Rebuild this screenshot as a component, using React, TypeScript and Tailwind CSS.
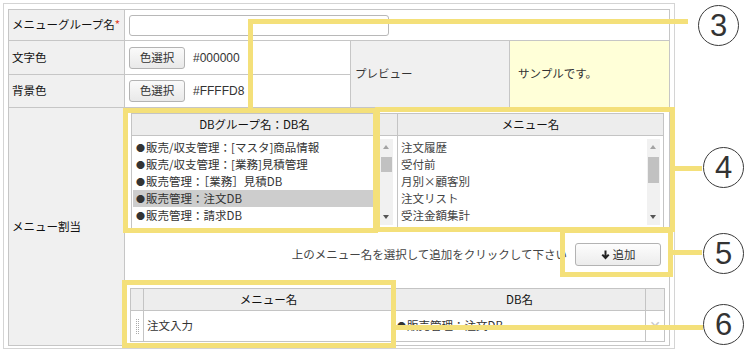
import React from "react";

const dbItems = [
    "販売/収支管理：[マスタ]商品情報",
    "販売/収支管理：[業務]見積管理",
    "販売管理：［業務］見積DB",
    "販売管理：注文DB",
    "販売管理：請求DB",
];

const menuItems = ["注文履歴", "受付前", "月別×顧客別", "注文リスト", "受注金額集計"];

function Scrollbar({ thumbTop, thumbHeight }: { thumbTop: number; thumbHeight: number }) {
    return (
        <div className="relative w-[13px] h-[86px] bg-[#f1f1f1]">
            <div className="absolute left-[3px] top-[6px] w-0 h-0 border-x-[3.5px] border-x-transparent border-b-[4px] border-b-[#a3a3a3]" />
            <div
                className="absolute left-[1px] w-[11px] bg-[#c1c1c1]"
                style={{ top: thumbTop, height: thumbHeight }}
            />
            <div className="absolute left-[3px] bottom-[6px] w-0 h-0 border-x-[3.5px] border-x-transparent border-t-[4px] border-t-[#555]" />
        </div>
    );
}

function Circled({ n, x, y }: { n: string; x: number; y: number }) {
    return (
        <div
            className="absolute w-[41px] h-[41px] rounded-full border-[1.5px] border-[#3a3a3a] flex items-center justify-center text-[31px] leading-none text-[#333] font-['Liberation_Sans',sans-serif]"
            style={{ left: x, top: y }}
        >
            {n}
        </div>
    );
}

function Bullet() {
    return <span className="text-[9px] align-[1px] mr-[1px]">●</span>;
}

export default function App() {
    return (
        <div className="relative w-[745px] h-[352px] bg-white overflow-hidden font-['Noto_Sans_CJK_JP',sans-serif] text-[11.5px] text-[#333]">
            {/* form frame */}
            <div className="ml-[3px] mt-[3px] w-[672px] h-[346px] border border-[#d4d4d4] pt-[5px] pl-[4px]">
                <table className="w-[661px] border-collapse table-fixed">
                    <colgroup>
                        <col className="w-[116px]" />
                        <col className="w-[226px]" />
                        <col className="w-[159px]" />
                        <col className="w-[160px]" />
                    </colgroup>
                    <tbody>
                        <tr className="h-[31px]">
                            <th className="border border-[#c6c6c6] bg-[#f0f0f0] text-left font-normal text-[#111] px-[3px] whitespace-nowrap">
                                メニューグループ名<span className="text-[#e03c1e]">*</span>
                            </th>
                            <td colSpan={3} className="border border-[#c6c6c6] px-[4px]">
                                <div className="w-[260px] h-[21px] border border-[#b8b8b8] rounded-[3px] bg-white" />
                            </td>
                        </tr>
                        <tr className="h-[34px]">
                            <th className="border border-[#c6c6c6] bg-[#f0f0f0] text-left font-normal text-[#111] px-[3px]">
                                文字色
                            </th>
                            <td className="border border-[#c6c6c6] px-[4px]">
                                <div className="flex items-center gap-[8px]">
                                    <button className="w-[56px] h-[22px] border border-[#b3b3b3] rounded-[3px] bg-gradient-to-b from-[#fafafa] to-[#e9e9e9] text-[11.5px] text-[#333]">
                                        色選択
                                    </button>
                                    <span className="font-['Liberation_Sans',sans-serif] text-[12px]">#000000</span>
                                </div>
                            </td>
                            <td rowSpan={2} className="border border-[#c6c6c6] bg-[#f0f0f0] px-[4px]">
                                プレビュー
                            </td>
                            <td rowSpan={2} className="border border-[#c6c6c6] bg-[#ffffd8] px-[8px]">
                                サンプルです。
                            </td>
                        </tr>
                        <tr className="h-[33px]">
                            <th className="border border-[#c6c6c6] bg-[#f0f0f0] text-left font-normal text-[#111] px-[3px]">
                                背景色
                            </th>
                            <td className="border border-[#c6c6c6] px-[4px]">
                                <div className="flex items-center gap-[8px]">
                                    <button className="w-[56px] h-[22px] border border-[#b3b3b3] rounded-[3px] bg-gradient-to-b from-[#fafafa] to-[#e9e9e9] text-[11.5px] text-[#333]">
                                        色選択
                                    </button>
                                    <span className="font-['Liberation_Sans',sans-serif] text-[12px]">#FFFFD8</span>
                                </div>
                            </td>
                        </tr>
                        <tr className="h-[238px]">
                            <th className="border border-[#c6c6c6] bg-[#f0f0f0] text-left font-normal text-[#111] px-[3px]">
                                メニュー割当
                            </th>
                            <td colSpan={3} className="border border-[#c6c6c6] align-top pl-[6px] pt-[5px]">
                                {/* pick lists */}
                                <div className="w-[533px] grid grid-cols-[266px_1fr] border border-[#c4c4c4]">
                                    <div className="h-[22px] bg-[#ededed] border-b border-r border-[#c4c4c4] flex items-center justify-center pr-[20px] text-[#111]">
                                        DBグループ名：DB名
                                    </div>
                                    <div className="h-[22px] bg-[#ededed] border-b border-[#c4c4c4] flex items-center justify-center text-[#111]">
                                        メニュー名
                                    </div>
                                    <div className="h-[92px] flex pt-[3px] pl-[1px] pr-[4px] border-r border-[#c4c4c4]">
                                        <div className="flex-1 flex flex-col">
                                            {dbItems.map((it, i) => (
                                                <div
                                                    key={it}
                                                    className={
                                                        "h-[17px] leading-[17px] pl-[3px] whitespace-nowrap " +
                                                        (i === 3 ? "bg-[#cdcdcd]" : "")
                                                    }
                                                >
                                                    <Bullet />
                                                    {it}
                                                </div>
                                            ))}
                                        </div>
                                        <Scrollbar thumbTop={18} thumbHeight={15} />
                                    </div>
                                    <div className="h-[92px] flex pt-[3px] pl-[3px] pr-[3px]">
                                        <div className="flex-1 flex flex-col text-[#444]">
                                            {menuItems.map((it) => (
                                                <div key={it} className="h-[17px] leading-[17px] whitespace-nowrap">
                                                    {it}
                                                </div>
                                            ))}
                                        </div>
                                        <Scrollbar thumbTop={18} thumbHeight={26} />
                                    </div>
                                </div>

                                {/* add row */}
                                <div className="w-[530px] mt-[14px] flex items-center justify-end gap-[8px]">
                                    <span className="text-[#444]">上のメニュー名を選択して追加をクリックして下さい</span>
                                    <button className="w-[86px] h-[23px] border border-[#b3b3b3] rounded-[3px] bg-gradient-to-b from-[#fdfdfd] to-[#ececec] flex items-center justify-center gap-[3px] text-[11.5px] text-[#333]">
                                        <svg width="9" height="10" viewBox="0 0 9 10">
                                            <path d="M4.5 9.5 L0.5 5.2 L2 3.9 L3.5 5.5 L3.5 0.5 L5.5 0.5 L5.5 5.5 L7 3.9 L8.5 5.2 Z" fill="#222" />
                                        </svg>
                                        追加
                                    </button>
                                </div>

                                {/* assigned grid */}
                                <div className="w-[535px] mt-[22px] -ml-[1px] border border-[#c4c4c4] grid grid-cols-[13px_250px_252px_1fr]">
                                    <div className="h-[22px] bg-[#ededed] border-r border-b border-[#c4c4c4]" />
                                    <div className="h-[22px] bg-[#ededed] border-r border-b border-[#c4c4c4] flex items-center justify-center text-[#111]">
                                        メニュー名
                                    </div>
                                    <div className="h-[22px] bg-[#ededed] border-r border-b border-[#c4c4c4] flex items-center justify-center text-[#111]">
                                        DB名
                                    </div>
                                    <div className="h-[22px] bg-[#ededed] border-b border-[#c4c4c4]" />
                                    <div className="h-[30px] border-r border-[#c4c4c4] flex items-center justify-center">
                                        <div className="w-[3px] h-[15px] border-x border-dotted border-[#aaa]" />
                                    </div>
                                    <div className="h-[30px] border-r border-[#c4c4c4] flex items-center pl-[3px]">
                                        注文入力
                                    </div>
                                    <div className="h-[30px] border-r border-[#c4c4c4] flex items-center pl-[3px] whitespace-nowrap">
                                        <Bullet />
                                        販売管理：注文DB
                                    </div>
                                    <div className="h-[30px] flex items-center justify-center text-[#c8c8c8] text-[14px] font-bold font-['DejaVu_Sans',sans-serif]">
                                        ✕
                                    </div>
                                </div>
                            </td>
                        </tr>
                    </tbody>
                </table>
            </div>

            {/* callout annotations */}
            <div className="absolute left-[248px] top-[19px] w-[440px] h-[5px] bg-[#f4e07a]" />
            <div className="absolute left-[248px] top-[19px] w-[5px] h-[90px] bg-[#f4e07a]" />
            <div className="absolute left-[123px] top-[108px] w-[255px] h-[125px] border-[5px] border-[#f4e07a]" />
            <Circled n="3" x={698} y={5} />

            <div className="absolute left-[375px] top-[107px] w-[300px] h-[125px] border-[5px] border-[#f4e07a]" />
            <div className="absolute left-[675px] top-[166px] w-[27px] h-[5px] bg-[#f4e07a]" />
            <Circled n="4" x={703} y={147} />

            <div className="absolute left-[560px] top-[228px] w-[113px] h-[49px] border-[5px] border-[#f4e07a]" />
            <div className="absolute left-[673px] top-[250px] w-[29px] h-[5px] bg-[#f4e07a]" />
            <Circled n="5" x={703} y={233} />

            <div className="absolute left-[122px] top-[280px] w-[274px] h-[68px] border-[5px] border-[#f4e07a]" />
            <div className="absolute left-[396px] top-[325px] w-[307px] h-[5px] bg-[#f4e07a]" />
            <Circled n="6" x={703} y={304} />
        </div>
    );
}
